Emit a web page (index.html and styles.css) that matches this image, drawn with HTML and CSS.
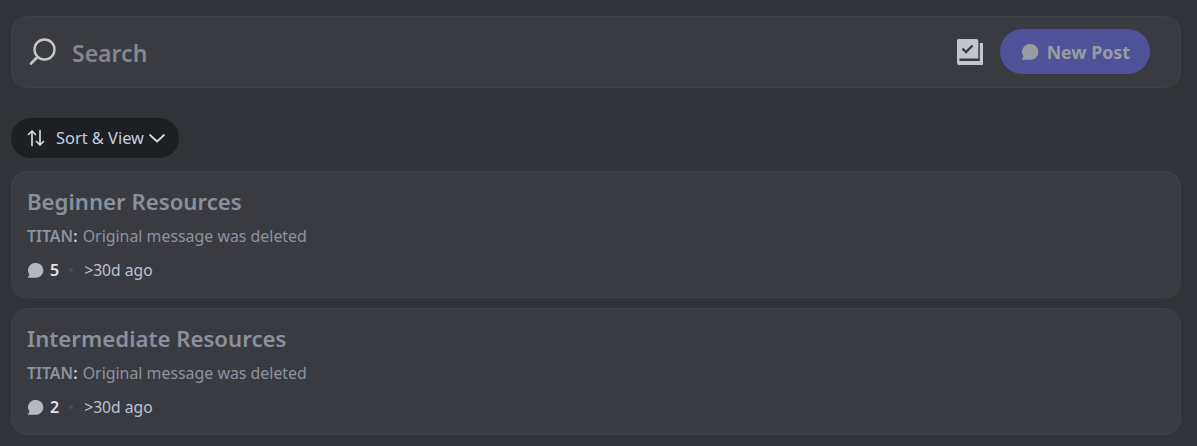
FILE: index.html
```html
<!DOCTYPE html>
<html lang="en">
  <head>
    <meta charset="UTF-8" />
    <title>Forum</title>
    <link rel="stylesheet" href="styles.css">
  </head>
  <body>
    <div class="search-bar">
      <svg class="search-icon" width="30" height="30" viewBox="0 0 30 30">
        <circle cx="16.5" cy="12.5" r="10" fill="none" stroke="currentColor" stroke-width="2.4" />
        <path d="M9.5 20 L3 26.5" fill="none" stroke="currentColor" stroke-width="2.6" stroke-linecap="round" />
      </svg>
      <span class="search-text">Search</span>
      <svg class="tasks-icon" width="28" height="28" viewBox="0 0 28 28">
        <path d="M2.500 1 H20 Q22.300 1 22.300 3 V20.500 H3.500 V23 H23.800 V5 H27 V27 H3 Q1 27 1 25 V2.500 Q1 1 2.500 1 Z" fill="currentColor" />
        <path d="M6.500 10.500 L10 14 L16.500 7.500" fill="none" stroke="#3a3b41" stroke-width="2.400" />
      </svg>
      <button class="new-post">
        <svg class="bubble" width="18" height="18" viewBox="0 0 18 18">
          <path d="M9.500 1 A7.800 7.800 0 1 1 9.500 16.700 H1.400 Q0.700 16.700 1.100 16 L2.600 13.400 A7.800 7.800 0 0 1 9.500 1 Z" fill="currentColor" />
        </svg>
        New Post
      </button>
    </div>

    <div class="sort-row">
      <button class="sort-btn">
        <svg width="18" height="18" viewBox="0 0 18 18">
          <path d="M5 16.500 V2 M1.500 5.500 L5 2 L8.500 5.500 M13 1.500 V16 M9.500 12.500 L13 16 L16.500 12.500" fill="none" stroke="currentColor" stroke-width="1.700" stroke-linecap="round" stroke-linejoin="round" />
        </svg>
        <span class="sort-label">Sort &amp; View</span>
        <svg width="16" height="16" viewBox="0 0 16 16">
          <path d="M1 5 L8 11.500 L15 5" fill="none" stroke="currentColor" stroke-width="1.800" stroke-linecap="round" stroke-linejoin="round" />
        </svg>
      </button>
    </div>

    <div class="post-list">
      <div class="post">
        <h3>Beginner Resources</h3>
        <p class="preview"><b>TITAN<i>:</i></b> Original message was deleted</p>
        <div class="meta">
          <svg class="bubble" width="17" height="17" viewBox="0 0 18 18">
            <path d="M9.500 1 A7.800 7.800 0 1 1 9.500 16.700 H1.400 Q0.700 16.700 1.100 16 L2.600 13.400 A7.800 7.800 0 0 1 9.500 1 Z" fill="currentColor" />
          </svg>
          <span class="count">5</span>
          <span class="dot"></span>
          <span class="age">&gt;30d ago</span>
        </div>
      </div>
      <div class="post">
        <h3>Intermediate Resources</h3>
        <p class="preview"><b>TITAN<i>:</i></b> Original message was deleted</p>
        <div class="meta">
          <svg class="bubble" width="17" height="17" viewBox="0 0 18 18">
            <path d="M9.500 1 A7.800 7.800 0 1 1 9.500 16.700 H1.400 Q0.700 16.700 1.100 16 L2.600 13.400 A7.800 7.800 0 0 1 9.500 1 Z" fill="currentColor" />
          </svg>
          <span class="count">2</span>
          <span class="dot"></span>
          <span class="age">&gt;30d ago</span>
        </div>
      </div>
    </div>
  </body>
</html>
```

FILE: styles.css
```css
* {
  margin: 0;
  padding: 0;
  box-sizing: border-box;
}
html,
body {
  height: 446px;
  overflow: hidden;
}
body {
  font-family: "Noto Sans", Arial, sans-serif;
  background-color: #313338;
  padding: 16px 16px 0 11px;
  color: #dbdee1;
}
button {
  font-family: inherit;
  border: none;
}
.search-bar {
  display: flex;
  align-items: center;
  height: 72px;
  padding: 0 30px 0 16px;
  background-color: #3a3b41;
  border: 1px solid #404147;
  border-radius: 16px;
}
.search-icon {
  color: #c4c6ca;
}
.search-text {
  flex: 1;
  margin-left: 14px;
  padding-top: 1px;
  font-size: 23px;
  font-weight: 600;
  color: #85878c;
}
.tasks-icon {
  color: #c2c5cb;
  margin-right: 16px;
}
.new-post {
  display: flex;
  align-items: center;
  gap: 8px;
  height: 45px;
  margin-bottom: 1px;
  padding: 0 20px 0 21px;
  border-radius: 23px;
  background-color: #4f5299;
  color: #9a9ca2;
  font-size: 17.800px;
  font-weight: 700;
}
.sort-row {
  margin-top: 30px;
}
.sort-btn {
  display: inline-flex;
  align-items: center;
  height: 40px;
  padding: 0 14px 0 16px;
  border-radius: 20px;
  background-color: #1e1f22;
  color: #d5d8dc;
}
.sort-label {
  margin: 0 5px 2px 11px;
  font-size: 16.400px;
  color: #c3d0e0;
}
.post-list {
  display: flex;
  flex-direction: column;
  gap: 10px;
  margin-top: 13px;
}
.post {
  height: 127px;
  padding: 15px 15px 0;
  background-color: #3a3b41;
  border: 1px solid #404147;
  border-radius: 16px;
}
.post h3 {
  font-size: 22.200px;
  line-height: 30px;
  font-weight: 600;
  color: #8a909c;
}
.preview {
  margin-top: 8px;
  font-size: 15.900px;
  line-height: 22px;
  color: #8d93a0;
}
.preview b {
  margin-right: 1px;
  font-weight: 600;
}
.preview i {
  font-style: normal;
  color: #cfd2d6;
}
.meta {
  display: flex;
  align-items: center;
  margin-top: 12px;
  height: 22px;
  font-size: 16px;
}
.meta .bubble {
  color: #b5b8bd;
}
.count {
  margin-left: 6px;
  font-weight: 600;
  color: #e4e6e9;
}
.dot {
  width: 4px;
  height: 4px;
  margin: 0 11px 0 10px;
  border-radius: 50%;
  background-color: #4a4c52;
}
.age {
  font-size: 15.700px;
  color: #bcc3cf;
}
```
